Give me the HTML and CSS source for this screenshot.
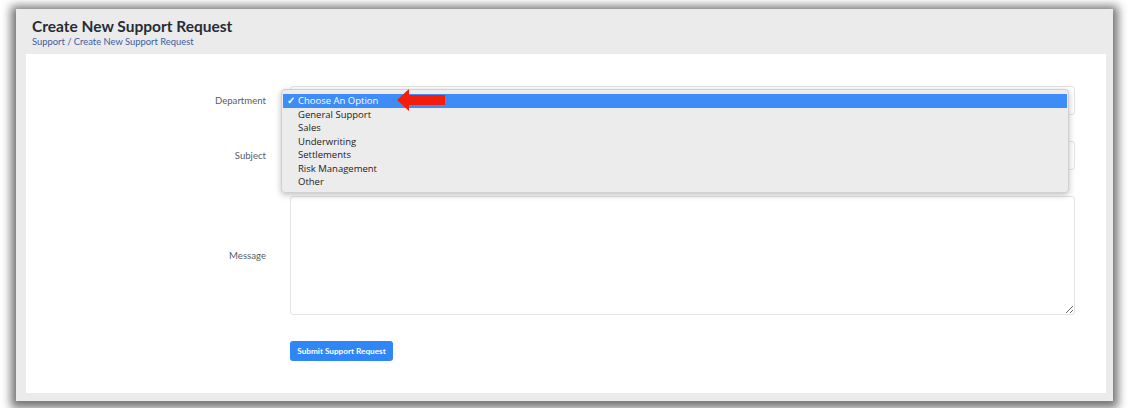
FILE: index.html
```html
<!DOCTYPE html>
<html>
<head>
<meta charset="utf-8">
<link rel="stylesheet" href="styles.css">
</head>
<body>
<div class="panel">
  <div class="header">
    <h1 class="title">Create New Support Request</h1>
    <div class="crumbs">Support / Create New Support Request</div>
  </div>
  <div class="card">
    <form class="form">
      <div class="row">
        <label class="label">Department</label>
        <div class="field select-wrap">
          <div class="select"></div>
          <ul class="menu">
            <li class="opt active"><span class="check">✓</span>Choose An Option</li>
            <li class="opt">General Support</li>
            <li class="opt">Sales</li>
            <li class="opt">Underwriting</li>
            <li class="opt">Settlements</li>
            <li class="opt">Risk Management</li>
            <li class="opt">Other</li>
          </ul>
          <svg class="arrow" width="50" height="24" viewBox="0 0 50 24">
            <polygon points="0,12 12,1 12,7 48,7 48,17 12,17 12,23" fill="#f41d0b"/>
          </svg>
        </div>
      </div>
      <div class="row">
        <label class="label">Subject</label>
        <div class="field"><input class="input" type="text"></div>
      </div>
      <div class="row">
        <label class="label">Message</label>
        <div class="field"><textarea class="textarea"></textarea></div>
      </div>
      <div class="row">
        <span class="label"></span>
        <div class="field"><button class="btn" type="button">Submit Support Request</button></div>
      </div>
    </form>
  </div>
</div>
</body>
</html>
```

FILE: styles.css
```css
html, body {
  margin: 0;
  padding: 0;
  background: #ffffff;
}
body {
  width: 1128px;
  height: 408px;
  overflow: hidden;
  font-family: "Open Sans", "Liberation Sans", sans-serif;
}
.panel {
  margin: 9px 0 0 16px;
  width: 1097px;
  height: 392px;
  background: #ebebeb;
  box-shadow: 0 2px 9px 5px rgba(0, 0, 0, 0.55);
  box-sizing: border-box;
  padding: 0 7px 8px 10px;
  display: flex;
  flex-direction: column;
}
.header {
  height: 45px;
  padding: 7px 0 0 6px;
  box-sizing: border-box;
}
.title {
  margin: 0;
  font-family: "Lato", sans-serif;
  font-weight: 700;
  font-size: 15.5px;
  line-height: 20px;
  color: #272c37;
}
.crumbs {
  font-family: "Lato", sans-serif;
  font-size: 9.4px;
  line-height: 12px;
  color: #3c5d9f;
}
.card {
  flex: 1;
  background: #ffffff;
  padding: 32px 31px 0 0;
}
.form {
  display: flex;
  flex-direction: column;
  gap: 26px;
}
.row {
  display: flex;
  align-items: center;
  gap: 24px;
}
.label {
  width: 240px;
  text-align: right;
  font-family: "Lato", sans-serif;
  font-size: 9.6px;
  color: #585d66;
}
.field {
  flex: 1;
}
.select-wrap {
  position: relative;
}
.select, .input {
  display: block;
  box-sizing: border-box;
  width: 100%;
  height: 29px;
  border: 1px solid #e4e4e4;
  border-radius: 3px;
  background: #fff;
  margin: 0;
}
.textarea {
  display: block;
  box-sizing: border-box;
  width: 100%;
  height: 119px;
  border: 1px solid #e4e4e4;
  border-radius: 3px;
  margin: 0;
  resize: vertical;
}
.btn {
  display: block;
  height: 20px;
  width: 103px;
  padding: 0;
  border: none;
  border-radius: 3px;
  background: #2f86f6;
  color: #fff;
  font-family: "Lato", sans-serif;
  font-weight: 700;
  font-size: 8.2px;
}
.menu {
  position: absolute;
  left: -9px;
  top: 3px;
  width: 788px;
  box-sizing: border-box;
  margin: 0;
  padding: 4px 1px 3px;
  list-style: none;
  background: #ececec;
  border: 1px solid #d0d0d0;
  border-radius: 4px;
  box-shadow: 0 2px 6px rgba(0, 0, 0, 0.25);
  z-index: 2;
}
.opt {
  position: relative;
  height: 13.5px;
  line-height: 13.5px;
  padding-left: 15px;
  font-family: "Open Sans", sans-serif;
  font-size: 9.5px;
  color: #222;
}
.opt.active {
  background: #3d8cf8;
  color: #fff;
}
.check {
  position: absolute;
  left: 4px;
  top: 0;
  font-weight: 700;
}
.arrow {
  position: absolute;
  left: 107px;
  top: 2px;
  z-index: 3;
}
```
